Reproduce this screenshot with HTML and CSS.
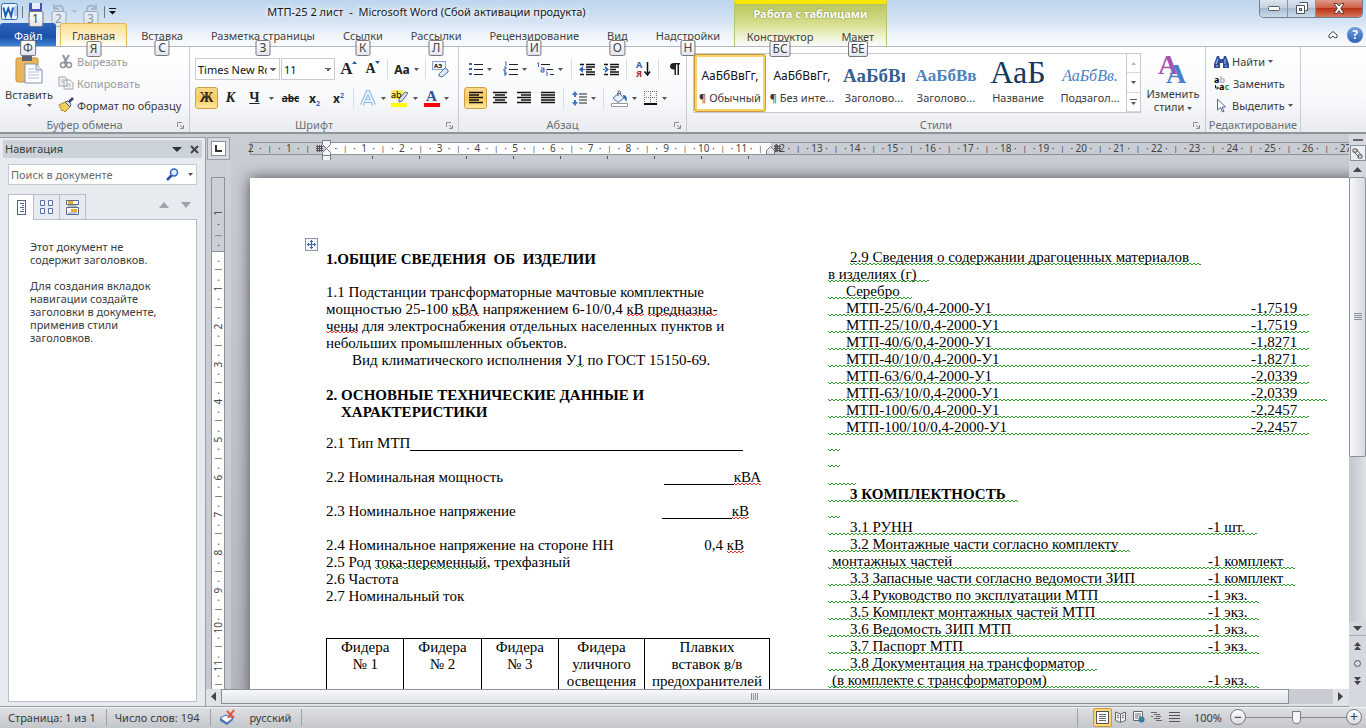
FILE: index.html
```html
<!DOCTYPE html>
<html lang="ru">
<head>
  <meta charset="UTF-8">
  <meta name="viewport" content="width=device-width, initial-scale=1.0">
  <title>МТП-25 2 лист - Microsoft Word</title>
  <link rel="stylesheet" href="styles.css">
</head>
<body>
  <header class="header">
    <div class="header-left">
      <div class="titlebar">
        <svg class="word-logo" width="18" height="18" viewBox="0 0 18 18"><rect x=".5" y=".5" width="16" height="16" rx="2" fill="#eef5fd" stroke="#2f6cb3"/><path d="M13 4h3M13 6h3M13 8h3M13 10h3M13 12h3" stroke="#7ba7d9"/><path d="M2.500 4.500l2 8.500 2.800-7.500 2.800 7.500 2-8.500" fill="none" stroke="#1d5fae" stroke-width="2"/></svg>
        <span class="bar-sep"></span>
        <div class="quick">
          <button class="quick-btn" aria-label="Сохранить"><svg width="16" height="16" viewBox="0 0 16 16"><path d="M1 1h13v14H1z" fill="#4355c0"/><path d="M4 1h8v6H4z" fill="#e8f0ff"/><path d="M4 10h8v5H4z" fill="#b9c6ea"/></svg><kbd class="tip">1</kbd></button>
          <button class="quick-btn faded" aria-label="Отменить"><svg width="16" height="16" viewBox="0 0 16 16"><path d="M3 2v5h5M3.500 6.500C6 2 13 3 12 9c0 2-2 4-4 4" fill="none" stroke="#8c97a6" stroke-width="2"/></svg><kbd class="tip">2</kbd></button>
          <svg class="caret pale" width="5" height="3"><path d="M0 0h5L2.500 3z"/></svg>
          <button class="quick-btn faded" aria-label="Повторить"><svg width="16" height="16" viewBox="0 0 16 16"><path d="M13 2v5H8M12.500 6.500C10 2 3 3 4 9c0 2 2 4 4 4" fill="none" stroke="#8c97a6" stroke-width="2"/></svg><kbd class="tip">3</kbd></button>
          <span class="bar-sep"></span>
          <svg width="7" height="7" viewBox="0 0 7 7"><path d="M0 0h7v1H0zM0 3h7L3.500 6.500z" fill="#111"/></svg>
        </div>
        <h1 class="title">МТП-25 2 лист&nbsp; -&nbsp; Microsoft Word (Сбой активации продукта)</h1>
      </div>
      <nav class="tabs">
        <button class="tab file">Файл<kbd class="tip">Ф</kbd></button>
        <button class="tab active">Главная<kbd class="tip">Я</kbd></button>
        <button class="tab">Вставка<kbd class="tip">С</kbd></button>
        <button class="tab">Разметка страницы<kbd class="tip">З</kbd></button>
        <button class="tab">Ссылки<kbd class="tip">К</kbd></button>
        <button class="tab">Рассылки<kbd class="tip">Л</kbd></button>
        <button class="tab">Рецензирование<kbd class="tip">И</kbd></button>
        <button class="tab">Вид<kbd class="tip">О</kbd></button>
        <button class="tab">Надстройки<kbd class="tip">Н</kbd></button>
      </nav>
    </div>
    <div class="context">
      <div class="context-label">Работа с таблицами</div>
      <nav class="tabs">
        <button class="tab">Конструктор<kbd class="tip">БС</kbd></button>
        <button class="tab">Макет<kbd class="tip">БЕ</kbd></button>
      </nav>
    </div>
    <div class="header-right">
      <div class="window-buttons">
        <button class="win-btn" aria-label="Свернуть"><svg width="12" height="5"><rect x=".5" y=".5" width="11" height="4" rx="1" fill="#fff" stroke="#555c66"/></svg></button>
        <button class="win-btn" aria-label="Восстановить"><svg width="12" height="12"><path d="M3.500.500h8v8h-2M.500 3.500h8v8h-8z" fill="#fff" stroke="#4b525c"/><rect x="3.500" y="6.500" width="2" height="2" fill="none" stroke="#4b525c"/></svg></button>
        <button class="win-btn close" aria-label="Закрыть"><svg width="12" height="11" viewBox="0 0 12 11"><path d="M1 .500h3l2 2.500 2-2.500h3L7.800 5.300 11 10.500H8L6 7.500l-2 3H1l3.200-5.200z" fill="#fff" stroke="#5b3a3a"/></svg></button>
      </div>
      <div class="help-row">
        <svg width="10" height="8" viewBox="0 0 10 8"><path d="M1 4l4-3.500L9 4v2.500L7 7 5 5 3 7 1 6.500z" fill="#fff" stroke="#444"/></svg>
        <button class="help" aria-label="Справка">?</button>
      </div>
    </div>
  </header>

  <section class="ribbon">
    <div class="group clipboard">
      <div class="group-body">
        <button class="big-btn">
          <svg width="30" height="31" viewBox="0 0 30 31"><rect x="2" y="4" width="22" height="24" rx="2" fill="#e9b65c" stroke="#c48d38"/><path d="M8 2h10v5H8z" fill="#5d6470"/><path d="M11 10h11l6 6v13H11z" fill="#fff" stroke="#7d93b5"/><path d="M22 10v6h6" fill="#dbe6f5" stroke="#7d93b5"/><path d="M14 15h6M14 18h11M14 21h11M14 24h11" stroke="#a9bdd8"/></svg>
          Вставить
          <svg class="caret" width="5" height="3"><path d="M0 0h5L2.500 3z"/></svg>
        </button>
        <div class="stack">
          <button class="line-btn disabled"><svg width="16" height="15" viewBox="0 0 16 15"><path d="M5 1l4 8M11 1L6 9" stroke="#8f959d" stroke-width="2"/><circle cx="5" cy="11" r="2.500" fill="none" stroke="#8f959d" stroke-width="1.500"/><circle cx="11" cy="11" r="2.500" fill="none" stroke="#8f959d" stroke-width="1.500"/></svg>Вырезать</button>
          <button class="line-btn disabled"><svg width="16" height="14" viewBox="0 0 16 14"><path d="M1 1h6l2 2v7H1zM6 4h6l3 3v6H6z" fill="#f4f4f4" stroke="#a3a8ae"/><path d="M3 4h3M3 6h3M8 8h5M8 10h5" stroke="#b5b9be"/></svg>Копировать</button>
          <button class="line-btn"><svg width="16" height="14" viewBox="0 0 16 14"><path d="M1 7l6-3 5 5-5 5-2-2-1 1z" fill="#f0cf62" stroke="#b48a2c"/><path d="M7 4l3-1 3 3-1 3z" fill="#d8dce8" stroke="#555b7a"/><path d="M11 4l4-4" stroke="#3d3f66" stroke-width="2.500"/></svg>Формат по образцу</button>
        </div>
      </div>
      <div class="group-label">Буфер обмена<svg class="launcher" width="7" height="7"><path d="M.500 5V.500H5M3 3l3 3M6.500 3v3.500H3" /></svg></div>
    </div>

    <div class="group font">
      <div class="group-body rows">
        <div class="row">
          <select class="combo name" aria-label="Шрифт"><option>Times New Roman</option></select>
          <select class="combo size" aria-label="Размер шрифта"><option>11</option></select>
          <button class="tool first" aria-label="Увеличить размер"><b class="serif grow">A</b><svg class="mark" width="5" height="3"><path d="M0 3h5L2.500 0z" fill="#2c58a8"/></svg></button>
          <button class="tool" aria-label="Уменьшить размер"><b class="serif">A</b><svg class="mark" width="5" height="3"><path d="M0 0h5L2.500 3z" fill="#2c58a8"/></svg></button>
          <span class="sep"></span>
          <button class="tool wide" aria-label="Регистр"><b class="case">Aa</b><svg class="caret" width="5" height="3"><path d="M0 0h5L2.500 3z"/></svg></button>
          <span class="sep"></span>
          <button class="tool" aria-label="Очистить формат"><svg width="17" height="17" viewBox="0 0 17 17"><rect x=".5" y=".5" width="13" height="8" fill="#f2f6fc" stroke="#8aa5cc"/><text x="2" y="7" class="tiny">АЭ</text><path d="M7 13l6-6 3 2v2l-6 5-3-1z" fill="#dfe8f8" stroke="#4c6fae"/></svg></button>
        </div>
        <div class="row">
          <button class="tool on"><b class="serif">Ж</b></button>
          <button class="tool"><b class="serif"><i>К</i></b></button>
          <button class="tool"><b class="serif"><u>Ч</u></b></button>
          <svg class="caret" width="5" height="3"><path d="M0 0h5L2.500 3z"/></svg>
          <button class="tool gap"><b class="strike">abc</b></button>
          <button class="tool"><b class="script">x<sub>2</sub></b></button>
          <button class="tool"><b class="script">x<sup>2</sup></b></button>
          <span class="sep"></span>
          <button class="tool wide" aria-label="Эффекты"><svg width="17" height="17" viewBox="0 0 17 17"><path d="M2 15L7.500 2h1L14 15M5 11h7" fill="none" stroke="#8dbdea" stroke-width="4"/><path d="M2 15L7.500 2h1L14 15M5 11h7" fill="none" stroke="#fff" stroke-width="1.500"/></svg><svg class="caret" width="5" height="3"><path d="M0 0h5L2.500 3z"/></svg></button>
          <button class="tool wide" aria-label="Выделение"><svg width="18" height="17" viewBox="0 0 18 17"><rect width="12" height="9" fill="#f3ee62"/><text x="0" y="8" class="mini">ab</text><path d="M8 9l6-7 3 1-6 8-3 1z" fill="#dbe2ee" stroke="#52608a"/><path d="M0 13h16v4H0z" fill="#ff0"/></svg><svg class="caret" width="5" height="3"><path d="M0 0h5L2.500 3z"/></svg></button>
          <button class="tool wide" aria-label="Цвет текста"><svg width="16" height="17" viewBox="0 0 16 17"><text x="2" y="11" class="letter">A</text><path d="M0 13h16v4H0z" fill="#f00"/></svg><svg class="caret" width="5" height="3"><path d="M0 0h5L2.500 3z"/></svg></button>
        </div>
      </div>
      <div class="group-label">Шрифт<svg class="launcher" width="7" height="7"><path d="M.500 5V.500H5M3 3l3 3M6.500 3v3.500H3"/></svg></div>
    </div>

    <div class="group para">
      <div class="group-body rows">
        <div class="row">
          <button class="tool list" aria-label="Маркеры"><svg width="14" height="14" viewBox="0 0 14 14"><path d="M0 1h3v2H0zM0 6h3v2H0zM0 11h3v2H0z" fill="#3a66b5"/><path d="M5 2.500h9M5 7.500h9M5 12.500h9" stroke="#222"/></svg><svg class="caret" width="5" height="3"><path d="M0 0h5L2.500 3z"/></svg></button>
          <button class="tool list" aria-label="Нумерация"><svg width="14" height="14" viewBox="0 0 14 14"><path d="M1 0h1v4M0 5h2v2H0v2h2M0 10h2v3H0M0 11.500h2" fill="none" stroke="#3a66b5"/><path d="M5 2.500h9M5 7.500h9M5 12.500h9" stroke="#222"/></svg><svg class="caret" width="5" height="3"><path d="M0 0h5L2.500 3z"/></svg></button>
          <button class="tool list" aria-label="Многоуровневый список"><svg width="17" height="15" viewBox="0 0 17 15"><path d="M0 1h1.500v4M4 6h3v4H4V8h3M9 10h1v4M9 8h1" fill="none" stroke="#3a66b5"/><path d="M4 2.500h9M10 7.500h6M13 12.500h4" stroke="#222"/></svg><svg class="caret" width="5" height="3"><path d="M0 0h5L2.500 3z"/></svg></button>
          <span class="sep"></span>
          <button class="tool" aria-label="Уменьшить отступ"><svg width="16" height="13" viewBox="0 0 16 13"><path d="M1 1.500h4M7 1.500h9M7 4h9M7 6.500h6M7 9h9M1 11.500h4M7 11.500h9" stroke="#111" stroke-width="1.500"/><path d="M0 6.500L4 3v7zM3 6h3v1H3z" fill="#2f66c0"/></svg></button>
          <button class="tool" aria-label="Увеличить отступ"><svg width="16" height="13" viewBox="0 0 16 13"><path d="M1 1.500h4M7 1.500h9M7 4h9M7 6.500h6M7 9h9M1 11.500h4M7 11.500h9" stroke="#111" stroke-width="1.500"/><path d="M6 6.500L2 3v7zM0 6h3v1H0z" fill="#2f66c0"/></svg></button>
          <span class="sep"></span>
          <button class="tool" aria-label="Сортировка"><svg width="14" height="16" viewBox="0 0 14 16"><text x="0" y="7" class="mini blue">А</text><text x="0" y="16" class="mini red">Я</text><path d="M11.500 1v12M8.500 10.500l3 3.500 2.500-3.500" fill="none" stroke="#111" stroke-width="1.500"/></svg></button>
          <span class="sep"></span>
          <button class="tool" aria-label="Знаки"><svg width="10" height="12" viewBox="0 0 10 12"><path d="M4 0h6v1.500H9V12H7.500V1.500H6V12H4.500V6.500C1 6.500 0 5 0 3.200 0 1 2 0 4 0z" fill="#222"/></svg></button>
        </div>
        <div class="row">
          <button class="tool on" aria-label="По левому краю"><svg width="14" height="12"><path d="M0 .500h14M0 3h10M0 5.500h14M0 8h10M0 10.500h14" stroke="#111" stroke-width="1.500"/></svg></button>
          <button class="tool" aria-label="По центру"><svg width="14" height="12"><path d="M0 .500h14M2 3h10M0 5.500h14M2 8h10M0 10.500h14" stroke="#111" stroke-width="1.500"/></svg></button>
          <button class="tool" aria-label="По правому краю"><svg width="14" height="12"><path d="M0 .500h14M4 3h10M0 5.500h14M4 8h10M0 10.500h14" stroke="#111" stroke-width="1.500"/></svg></button>
          <button class="tool" aria-label="По ширине"><svg width="14" height="12"><path d="M0 .500h14M0 3h14M0 5.500h14M0 8h14M0 10.500h14" stroke="#111" stroke-width="1.500"/></svg></button>
          <span class="sep"></span>
          <button class="tool wide" aria-label="Интервал"><svg width="15" height="15" viewBox="0 0 15 15"><path d="M3 0l3 4H4v2H2V4H0zM3 15l3-4H4V9H2v2H0z" fill="#3a78c9"/><path d="M7 3h8M7 6h8M7 9h8M7 12h8" stroke="#222"/></svg><svg class="caret" width="5" height="3"><path d="M0 0h5L2.500 3z"/></svg></button>
          <span class="sep"></span>
          <button class="tool wide" aria-label="Заливка"><svg width="17" height="17" viewBox="0 0 17 17"><path d="M2 8l6-5 5 5-6 4.500z" fill="#e8eff9" stroke="#4c6fae"/><path d="M7 6V1.500c2-1.500 3 0 2.500 2.500" fill="none" stroke="#555"/><path d="M12 5c4 0 4 3 3.500 7L13 8z" fill="#3467b4"/><path d="M.500 13.500h16v3H.500z" fill="#fff" stroke="#9a9a9a"/></svg><svg class="caret" width="5" height="3"><path d="M0 0h5L2.500 3z"/></svg></button>
          <button class="tool wide" aria-label="Границы"><svg width="14" height="14" viewBox="0 0 14 14"><path d="M0 .500h13M0 6.500h13M.500 0v13M6.500 0v13M12.500 0v13" stroke="#777" stroke-dasharray="1 1"/><path d="M0 13h13" stroke="#111" stroke-width="2"/></svg><svg class="caret" width="5" height="3"><path d="M0 0h5L2.500 3z"/></svg></button>
        </div>
      </div>
      <div class="group-label">Абзац<svg class="launcher" width="7" height="7"><path d="M.500 5V.500H5M3 3l3 3M6.500 3v3.500H3"/></svg></div>
    </div>

    <div class="group styles">
      <div class="group-body">
        <div class="gallery">
          <button class="style on"><span class="sample">АаБбВвГг,</span><span>¶ Обычный</span></button>
          <button class="style"><span class="sample">АаБбВвГг,</span><span>¶ Без инте...</span></button>
          <button class="style"><span class="sample h1">АаБбВв</span><span>Заголово...</span></button>
          <button class="style"><span class="sample h2">АаБбВв</span><span>Заголово...</span></button>
          <button class="style"><span class="sample name">АаБ</span><span>Название</span></button>
          <button class="style"><span class="sample sub">АаБбВв.</span><span>Подзагол...</span></button>
          <div class="gallery-scroll">
            <button class="pale" aria-label="Вверх"><svg class="caret" width="5" height="3"><path d="M0 3h5L2.500 0z"/></svg></button>
            <button aria-label="Вниз"><svg class="caret" width="5" height="3"><path d="M0 0h5L2.500 3z"/></svg></button>
            <button aria-label="Ещё"><svg class="caret" width="7" height="6"><path d="M0 0h7v1H0zM1 3h5L3.500 6z"/></svg></button>
          </div>
        </div>
        <button class="big-btn change">
          <svg width="30" height="29" viewBox="0 0 30 29"><text x="0" y="19" class="big-a purple">A</text><text x="8" y="28" class="big-a blue2">A</text></svg>
          <span>Изменить<br>стили <svg class="caret" width="5" height="3"><path d="M0 0h5L2.500 3z"/></svg></span>
        </button>
      </div>
      <div class="group-label">Стили<svg class="launcher" width="7" height="7"><path d="M.500 5V.500H5M3 3l3 3M6.500 3v3.500H3"/></svg></div>
    </div>

    <div class="group editing">
      <div class="group-body">
        <div class="stack">
          <button class="line-btn"><svg width="15" height="13" viewBox="0 0 15 13"><path d="M3 1h2l1 3h3l1-3h2l3 8v4H9V8H6v5H0V9z" fill="#2b4d9b"/><path d="M2 9l2-5M11 9V4M2 11h2M11 11h2" stroke="#b9cdf2"/></svg>Найти <svg class="caret" width="5" height="3"><path d="M0 0h5L2.500 3z"/></svg></button>
          <button class="line-btn"><svg width="16" height="15" viewBox="0 0 16 15"><text x="0" y="7" class="mini bold">a<tspan fill="#b5b5b5">b</tspan></text><text x="5" y="14" class="mini bold">a<tspan fill="#2a9a3a">c</tspan></text><path d="M1.500 9v3h3M3 10.500L4.500 12 3 13.500" fill="none" stroke="#222"/></svg>Заменить</button>
          <button class="line-btn"><svg width="15" height="15" viewBox="0 0 15 15"><path d="M3.500 1v11l3-2.500 2 4.500 1.500-.700-2-4.300h3.500z" fill="#fff" stroke="#5666a8"/></svg>Выделить <svg class="caret" width="5" height="3"><path d="M0 0h5L2.500 3z"/></svg></button>
        </div>
      </div>
      <div class="group-label">Редактирование</div>
    </div>
  </section>

  <main class="workspace">
    <aside class="nav-pane">
      <div class="nav-head"><h2>Навигация</h2>
        <svg width="10" height="5"><path d="M0 0h10L5 5z" fill="#333"/></svg>
        <button class="plain" aria-label="Закрыть"><svg width="9" height="9"><path d="M1 1l7 7M8 1L1 8" stroke="#444" stroke-width="2"/></svg></button>
      </div>
      <div class="search">
        <input type="text" placeholder="Поиск в документе" aria-label="Поиск в документе">
        <svg width="13" height="13" viewBox="0 0 13 13"><circle cx="8" cy="4.500" r="3.500" fill="#dcebfc" stroke="#2f64bd" stroke-width="1.500"/><path d="M5.500 7.500L1 12" stroke="#2c4f9e" stroke-width="2.500"/></svg>
        <svg class="caret" width="5" height="3"><path d="M0 0h5L2.500 3z"/></svg>
      </div>
      <div class="nav-tabs">
        <button class="nav-tab on" aria-label="Заголовки"><svg width="9" height="15"><rect x=".5" y=".5" width="8" height="14" fill="#fff" stroke="#4f6488"/><path d="M3 3.500h4M5 5.500h2M3 7.500h4M5 9.500h2M3 11.500h4" stroke="#4f6488"/></svg></button>
        <button class="nav-tab" aria-label="Страницы"><svg width="13" height="15"><path d="M.500.500h4v5h-4zM8.500.500h4v5h-4zM.500 8.500h4v5h-4zM8.500 8.500h4v5h-4z" fill="#fff" stroke="#5570a0"/></svg></button>
        <button class="nav-tab" aria-label="Результаты"><svg width="13" height="15"><path d="M.500.500h12v4H.500zM.500 7.500h12v7H.500z" fill="#fff" stroke="#5b6b85"/><path d="M2 1h5v3H2zM5 9h6v3H5z" fill="#f0a92c"/><path d="M2 13h9M2 6h9" stroke="#7f8ba0"/></svg></button>
        <div class="nav-arrows"><svg width="10" height="6"><path d="M0 6h10L5 0z"/></svg><svg width="10" height="6"><path d="M0 0h10L5 6z"/></svg></div>
      </div>
      <div class="nav-body">
        <p>Этот документ не содержит заголовков.</p>
        <p>Для создания вкладок навигации создайте заголовки в документе, применив стили заголовков.</p>
      </div>
    </aside>

    <section class="editor">
      <div class="tab-type"><span><svg width="7" height="7"><path d="M1 0v6h6" fill="none" stroke="#333" stroke-width="2"/></svg></span></div>
      <div class="hruler-wrap">
        <div class="hruler">
          <div class="marks before" data-from="-2" data-to="0"></div>
          <div class="marks after" data-from="0" data-to="27"></div>
          <svg class="grid-mark" width="9" height="9"><path d="M0 2.500h7M0 4.500h7M0 6.500h7M1.500 1v7M3.500 1v7M5.500 1v7" stroke="#555"/></svg>
          <svg class="indent" width="9" height="21" viewBox="0 0 9 21"><path d="M.500.500h8v4l-4 4-4-4zM4.500 8.500l4 4v3h-8v-3zM.500 15.500h8v5h-8z" fill="#f4f5f7" stroke="#777b82"/></svg>
          <svg class="indent right" width="9" height="9" viewBox="0 0 9 9"><path d="M4.500.500l4 4v4h-8v-4z" fill="#e4e6ea" stroke="#777b82"/></svg>
          <svg class="grid-mark column-end" width="9" height="9"><path d="M0 2.500h7M0 4.500h7M0 6.500h7M1.500 1v7M3.500 1v7M5.500 1v7" stroke="#555"/></svg>
        </div>
        <div class="stops"></div>
      </div>
      <div class="vruler-wrap">
        <div class="vruler">
          <div class="vmargin"><span>1</span><span>·</span><span>|</span><span>·</span></div>
          <div class="vmarks marks" data-from="0" data-to="12"></div>
        </div>
      </div>
      <div class="canvas">
        <article class="page">
          <svg class="anchor" width="13" height="13"><rect x=".5" y=".5" width="12" height="12" fill="#f2f5fa" stroke="#8c95a3"/><path d="M6.500 2v9M2 6.500h9M5 3.500h3M5 9.500h3M3.500 5v3M9.500 5v3" stroke="#3c66ad"/></svg>
          <div class="col">
            <h3>1.ОБЩИЕ СВЕДЕНИЯ&nbsp; ОБ&nbsp; ИЗДЕЛИИ</h3>
            <p>1.1 Подстанции трансформаторные мачтовые комплектные<br>мощностью 25-100 <span class="err">кВА</span> напряжением 6-10/0,4 <span class="err">кВ</span> <span class="err">предназна-</span><br><span class="err">чены</span> для электроснабжения отдельных населенных пунктов и<br>небольших промышленных объектов.<br><span class="indented">Вид климатического исполнения У<span class="gram">1</span> по ГОСТ 15150-69.</span></p>
            <h3 class="numbered">2. ОСНОВНЫЕ ТЕХНИЧЕСКИЕ ДАННЫЕ И ХАРАКТЕРИСТИКИ</h3>
            <p class="field type">2.1 Тип МТП<span class="blank long"></span></p>
            <p class="field">2.2 Номинальная мощность<span class="value"><span class="blank"></span><span class="err">кВА</span></span></p>
            <p class="field">2.3 Номинальное напряжение<span class="value volts"><span class="blank"></span><span class="err">кВ</span></span></p>
            <p class="field">2.4 Номинальное напряжение на стороне НН<span class="value low">0,4&nbsp;<span class="err">кВ</span></span></p>
            <p class="tight">2.5 Род <span class="gram">тока-переменный</span>, трехфазный<br>2.6 Частота<br>2.7 Номинальный ток</p>
            <table class="feeders">
              <tr><th>Фидера<br>№ 1</th><th>Фидера<br>№ 2</th><th>Фидера<br>№ 3</th><th>Фидера<br>уличного<br>освещения</th><th>Плавких<br>вставок <span class="gram">в</span>/в<br>предохранителей</th></tr>
            </table>
          </div>
          <div class="col second">
            <div class="item first"><span>2.9 Сведения о содержании драгоценных материалов</span></div>
            <div class="item flush"><span>в изделиях (г)</span></div>
            <div class="item metal"><span>Серебро</span></div>
            <div class="item metal"><span>МТП-25/6/0,4-2000-У1</span><span>-1,7519</span></div>
            <div class="item metal"><span>МТП-25/10/0,4-2000-У1</span><span>-1,7519</span></div>
            <div class="item metal"><span>МТП-40/6/0,4-2000-У1</span><span>-1,8271</span></div>
            <div class="item metal"><span>МТП-40/10/0,4-2000-У1</span><span>-1,8271</span></div>
            <div class="item metal"><span>МТП-63/6/0,4-2000-У1</span><span>-2,0339</span></div>
            <div class="item metal long"><span>МТП-63/10/0,4-2000-У1</span><span>-2,0339</span></div>
            <div class="item metal"><span>МТП-100/6/0,4-2000-У1</span><span>-2,2457</span></div>
            <div class="item metal"><span>МТП-100/10/0,4-2000-У1</span><span>-2,2457</span></div>
            <div class="item empty"></div>
            <div class="item empty"></div>
            <div class="item empty wide"></div>
            <h3 class="item">3 КОМПЛЕКТНОСТЬ</h3>
            <div class="item empty"></div>
            <div class="item"><span>3.1 РУНН</span><span>-1 шт.</span></div>
            <div class="item"><span>3.2 Монтажные части согласно комплекту</span></div>
            <div class="item back"><span>монтажных частей</span><span>-1 комплект</span></div>
            <div class="item"><span>3.3 Запасные части согласно ведомости ЗИП</span><span>-1 комплект</span></div>
            <div class="item"><span>3.4 Руководство по эксплуатации МТП</span><span>-1 экз.</span></div>
            <div class="item"><span>3.5 Комплект монтажных частей МТП</span><span>-1 экз.</span></div>
            <div class="item"><span>3.6 Ведомость ЗИП МТП</span><span>-1 экз.</span></div>
            <div class="item"><span>3.7 Паспорт МТП</span><span>-1 экз.</span></div>
            <div class="item"><span>3.8 Документация на трансформатор</span></div>
            <div class="item back"><span>(в комплекте с трансформатором)</span><span>-1 экз.</span></div>
          </div>
        </article>
      </div>
      <div class="vscroll">
        <span class="split"></span>
        <button class="ruler-btn" aria-label="Линейка"><svg width="11" height="11"><path d="M1 1h4v3H1zM6 7h4v3H6zM2 4l5 5M5 2l4 5" fill="none" stroke="#555"/></svg></button>
        <svg class="up" width="9" height="5"><path d="M0 5h9L4.500 0z"/></svg>
        <div class="vtrack"><div class="vthumb"><svg width="8" height="8"><path d="M0 .500h8M0 2.500h8M0 4.500h8M0 6.500h8" stroke="#8d929a"/></svg></div></div>
        <svg width="9" height="5"><path d="M0 0h9L4.500 5z"/></svg>
        <div class="browse">
          <svg width="7" height="8"><path d="M0 4h7L3.500 0zM0 8h7L3.500 4z"/></svg>
          <svg width="7" height="7"><circle cx="3.500" cy="3.500" r="3" fill="none" stroke="#555"/></svg>
          <svg width="7" height="8"><path d="M0 0h7L3.500 4zM0 4h7L3.500 8z"/></svg>
        </div>
      </div>
      <div class="hscroll">
        <svg width="5" height="9"><path d="M5 0v9L0 4.500z"/></svg>
        <div class="htrack"><div class="hthumb"><svg width="8" height="7"><path d="M.500 0v7M2.500 0v7M4.500 0v7M6.500 0v7" stroke="#8d929a"/></svg></div></div>
        <svg width="5" height="9"><path d="M0 0v9l5-4.500z"/></svg>
      </div>
    </section>
  </main>

  <footer class="status">
    <span class="cell pages">Страница: 1 из 1</span>
    <span class="cell words">Число слов: 194</span>
    <span class="cell lang"><svg width="17" height="16" viewBox="0 0 17 16"><path d="M1 9l6-3 7 3-6 5z" fill="#fff" stroke="#4269ae"/><path d="M1 9v3l7 4 6-5V9l-6 5z" fill="#4b74bd"/><path d="M8 2l7 7M15 1L9 9" stroke="#e2553f" stroke-width="2"/></svg>русский</span>
    <div class="views">
      <button class="view on" aria-label="Разметка"><svg width="13" height="13"><rect x=".5" y=".5" width="12" height="12" fill="#fff" stroke="#555"/><path d="M3 3.500h7M3 5.500h7M3 7.500h7M3 9.500h7" stroke="#666"/></svg></button>
      <button class="view" aria-label="Чтение"><svg width="12" height="12"><path d="M.500 1l5 2 5-2v8.500l-5 2-5-2zM5.500 3v8M2 4l2 1M2 6l2 1M7 5l2-1M7 7l2-1" fill="#f4f4f4" stroke="#666"/></svg></button>
      <button class="view" aria-label="Веб-документ"><svg width="12" height="12"><path d="M.500.500h9v9h-9zM2 3h6M2 5h6M2 7h3" fill="#fff" stroke="#666"/><circle cx="8.500" cy="8.500" r="3" fill="#2f78a8"/><path d="M7 8l2-1 1 2z" fill="#4cae5a"/></svg></button>
      <button class="view" aria-label="Структура"><svg width="11" height="10"><path d="M0 .500h6M3 2.500h6M5 4.500h5M3 6.500h6M5 8.500h6M0 4.500h2" stroke="#666"/></svg></button>
      <button class="view" aria-label="Черновик"><svg width="11" height="10"><path d="M0 .500h11M0 3.500h11M0 6.500h11M0 9.500h11" stroke="#555"/></svg></button>
    </div>
    <label class="zoom" for="zoom">100%</label>
    <button class="round" aria-label="Уменьшить">−</button>
    <input type="range" id="zoom" class="slider" min="0" max="100" value="50">
    <button class="round" aria-label="Увеличить">+</button>
  </footer>
  <script src="rulers.js"></script>
</body>
</html>
```
FILE: styles.css
```css
* {
  box-sizing: border-box;
}
body {
  margin: 0;
  height: 100vh;
  display: flex;
  flex-direction: column;
  overflow: hidden;
  font-family: "Noto Sans", sans-serif;
  font-size: 11px;
  color: #3b3b3b;
}
button, input, select, kbd {
  font-family: inherit;
  font-size: inherit;
  color: inherit;
}
button {
  padding: 0;
  border: 0;
  background: none;
}
svg {
  display: block;
  flex: none;
  overflow: visible;
}
h1, h2, h3, p {
  margin: 0;
  font-size: inherit;
}
.caret {
  fill: #555;
}
.pale .caret, .caret.pale {
  fill: #b5b9be;
}

/* title bar and tabs */
.header {
  display: flex;
  height: 47px;
  flex: none;
  background: linear-gradient(#bdd5ed, #d3e3f3 45%, #f1f6fb 80%, #f8fafc);
  border-bottom: 1px solid #b6bac0;
}
.header-left {
  width: 734px;
  display: flex;
  flex-direction: column;
}
.titlebar {
  height: 24px;
  display: flex;
  align-items: center;
  padding-left: 1px;
  gap: 3px;
}
.bar-sep {
  width: 1px;
  height: 12px;
  background: #6f7b8a;
}
.quick {
  display: flex;
  align-items: center;
  gap: 4px;
}
.quick-btn {
  position: relative;
  width: 19px;
  height: 20px;
  display: flex;
  justify-content: center;
}
.quick-btn.faded {
  opacity: 0.5;
}
.tip {
  position: absolute;
  z-index: 3;
  left: 50%;
  transform: translateX(-50%);
  min-width: 15px;
  height: 16px;
  padding: 0 2px;
  border: 1px solid #77777c;
  border-radius: 2px;
  background: linear-gradient(#fff, #e4e4ef);
  font-size: 12px;
  line-height: 14px;
  font-weight: normal;
  text-align: center;
  color: #444;
  text-shadow: none;
}
.quick-btn .tip {
  top: 9px;
}
.title {
  flex: 1;
  text-align: center;
  font-weight: normal;
  color: #1a1a1a;
  text-shadow: 0 0 6px #fff, 0 0 6px #fff;
}
.tabs {
  display: flex;
  height: 23px;
}
.tab {
  position: relative;
  padding: 1px 14px 0;
  white-space: nowrap;
  color: #444;
}
.tab .tip {
  top: 17px;
}
.tab.file {
  width: 56px;
  margin-right: 4px;
  border-radius: 3px 3px 0 0;
  background: linear-gradient(#2d66bd, #1d4fa5 60%, #3b86d8);
  color: #fff;
}
.tab.active {
  width: 68px;
  padding: 0;
  border: 1px solid #dfb858;
  border-bottom: 0;
  border-radius: 3px 3px 0 0;
  background: linear-gradient(#fbdf92, #fdf0c8 60%, #fff);
}
.context {
  width: 153px;
  border-top: 4px solid #fbe600;
  border-left: 1px solid #b9c36a;
  border-right: 1px solid #b9c36a;
  background: linear-gradient(#b9c65c, #d5dd8c 45%, #f0f4d6 80%, #f8fafc);
}
.context-label {
  height: 20px;
  line-height: 20px;
  text-align: center;
  font-weight: bold;
  color: #fff;
  text-shadow: 0 0 2px #76803a;
}
.context .tabs {
  justify-content: center;
}
.header-right {
  flex: 1;
  display: flex;
  flex-direction: column;
  align-items: flex-end;
}
.window-buttons {
  display: flex;
  height: 18px;
  margin-right: 3px;
  border: 1px solid #6f7e90;
  border-top: 0;
  border-radius: 0 0 5px 5px;
  overflow: hidden;
}
.win-btn {
  width: 28px;
  display: flex;
  align-items: center;
  justify-content: center;
  border-right: 1px solid #8593a4;
  background: linear-gradient(#dce6f1, #c3d0df 45%, #a9bbd0 50%, #cbdcec);
}
.win-btn.close {
  width: 46px;
  border-right: 0;
  background: linear-gradient(#dd9a8a, #cf5f45 45%, #b93218 50%, #d8755a);
}
.help-row {
  display: flex;
  align-items: center;
  gap: 9px;
  height: 29px;
  padding: 6px 3px 0 0;
}
.help {
  width: 16px;
  height: 16px;
  border-radius: 50%;
  background: linear-gradient(#6f9fe0, #2f62b8);
  color: #fff;
  font-size: 12px;
  line-height: 16px;
  font-weight: bold;
}

/* ribbon */
.ribbon {
  display: flex;
  flex: none;
  height: 87px;
  background: linear-gradient(#fff, #f8f9fb 60%, #e9ebef);
  border-bottom: 2px solid #8f949b;
}
.group {
  display: flex;
  flex-direction: column;
  flex: none;
  border-right: 1px solid #c8ccd2;
}
.group.clipboard { width: 190px; }
.group.font { width: 269px; }
.group.para { width: 228px; }
.group.styles { width: 519px; }
.group.editing { width: 95px; }
.group-body {
  flex: 1;
  display: flex;
}
.group-label {
  position: relative;
  height: 16px;
  line-height: 17px;
  text-align: center;
  padding-right: 20px;
  color: #6a6f77;
}
.editing .group-label {
  padding: 0;
}
.launcher {
  position: absolute;
  right: 5px;
  top: 6px;
  fill: none;
  stroke: #8a8f96;
}
.big-btn {
  width: 58px;
  display: flex;
  flex-direction: column;
  align-items: center;
  padding-top: 7px;
  gap: 3px;
  line-height: 13px;
}
.big-btn.change {
  width: 60px;
  margin-left: 2px;
  padding-top: 8px;
}
.big-btn span .caret {
  display: inline-block;
  vertical-align: middle;
}
.stack {
  display: flex;
  flex-direction: column;
  padding-top: 3px;
}
.editing .stack {
  padding-left: 8px;
}
.line-btn {
  display: flex;
  align-items: center;
  gap: 3px;
  height: 22px;
  white-space: nowrap;
}
.disabled {
  color: #9b9b9b;
}
.rows {
  flex-direction: column;
  padding: 11px 0 0 5px;
  gap: 7px;
}
.row {
  display: flex;
  align-items: center;
  height: 22px;
  gap: 1px;
}
.combo {
  appearance: none;
  height: 22px;
  padding: 0 12px 0 2px;
  border: 1px solid #c9cdd3;
  border-radius: 0;
  background: linear-gradient(45deg, transparent 50%, #666 50%) right 6px center / 3px 3px no-repeat, linear-gradient(-45deg, transparent 50%, #666 50%) right 3px center / 3px 3px no-repeat, #fff;
  color: #111;
}
.combo.name {
  width: 85px;
}
.combo.size {
  width: 54px;
}
.tool {
  width: 23px;
  height: 22px;
  display: flex;
  align-items: center;
  justify-content: center;
  gap: 4px;
  color: #222;
}
.tool.first {
  margin-left: 1px;
}
.tool.wide {
  width: 31px;
}
.tool.list {
  width: 34px;
}
.tool.gap {
  margin-left: 4px;
}
.tool.on {
  border: 1px solid #cda044;
  border-radius: 3px;
  background: linear-gradient(#fcd98a, #fbc95a 50%, #ffe89a);
}
.row > .caret {
  margin-left: 2px;
}
.sep {
  width: 1px;
  height: 20px;
  margin: 0 3px;
  background: #dadde2;
}
.font .sep {
  margin: 0 2px;
}
.serif {
  font-family: "Liberation Serif", serif;
  font-size: 14px;
}
.serif.grow {
  font-size: 17px;
}
.tool .serif + .mark {
  align-self: flex-start;
  margin: 3px 0 0 -5px;
}
.case {
  font-size: 12px;
}
.strike {
  font-size: 10px;
  text-decoration: line-through;
}
.script {
  font-size: 12px;
}
.script sub, .script sup {
  font-size: 7px;
  line-height: 0;
  color: #2c66bf;
}
.tiny {
  font-size: 6px;
  font-weight: bold;
}
.mini {
  font-size: 9px;
}
.mini.bold, .mini.blue, .mini.red {
  font-weight: bold;
}
.mini.blue { fill: #2f5fae; }
.mini.red { fill: #a83232; }
.letter {
  font: bold 15px "Liberation Serif", serif;
  fill: #2b4f92;
}
.big-a {
  font: bold 28px "Liberation Serif", serif;
}
.purple { fill: #a653b0; }
.blue2 { fill: #4c7fcb; }
.styles .group-body {
  padding-left: 6px;
}
.gallery {
  display: flex;
  height: 60px;
  margin-top: 6px;
  border: 1px solid #c6cad0;
  background: #fff;
}
.style {
  width: 72px;
  padding: 0 4px 4px;
  display: flex;
  flex-direction: column;
  align-items: center;
  overflow: hidden;
  white-space: nowrap;
  line-height: 16px;
}
.style.on {
  padding: 0 1px 1px;
  border: 3px solid #f9d368;
  outline: 1px solid #cb9a3b;
  outline-offset: -1px;
  border-radius: 3px;
}
.sample {
  width: 62px;
  height: 36px;
  line-height: 44px;
  overflow: hidden;
  font-size: 12px;
  color: #111;
}
.style.on .sample {
  height: 33px;
  line-height: 38px;
}
.sample.h1 {
  font: bold 19px/44px "Liberation Serif", serif;
  color: #365f91;
}
.sample.h2 {
  font: bold 17px/44px "Liberation Serif", serif;
  color: #4f81bd;
}
.sample.name {
  font: 32px/36px "Liberation Serif", serif;
  color: #17365d;
}
.sample.sub {
  font: italic 16px/44px "Liberation Serif", serif;
  color: #4f81bd;
}
.gallery-scroll {
  width: 14px;
  display: flex;
  flex-direction: column;
  border-left: 1px solid #c6cad0;
}
.gallery-scroll button {
  flex: 1;
  display: flex;
  align-items: center;
  justify-content: center;
  border-bottom: 1px solid #d5d8dd;
}

/* navigation pane */
.workspace {
  flex: 1;
  min-height: 0;
  display: flex;
  background: linear-gradient(#cacdd3, #b4b7bc);
}
.nav-pane {
  width: 206px;
  margin-top: 3px;
  padding: 2px 8px 4px;
  display: flex;
  flex-direction: column;
  flex: none;
  background: #e7eaee;
  border: solid #9a9fa7;
  border-width: 1px 1px 1px 0;
}
.nav-head {
  display: flex;
  align-items: center;
  gap: 8px;
  height: 18px;
  margin: 0 -5px;
  padding: 0 3px 0 2px;
  background: #ccd2da;
}
.nav-head h2 {
  flex: 1;
  font-weight: normal;
  line-height: 16px;
}
.search {
  display: flex;
  align-items: center;
  gap: 9px;
  height: 21px;
  margin-top: 6px;
  padding-right: 3px;
  border: 1px solid #c4c9d0;
  background: #fff;
}
.search input {
  flex: 1;
  min-width: 0;
  padding: 0 2px;
  border: 0;
  outline: 0;
}
.search input::placeholder {
  color: #6b6b6b;
}
.nav-tabs {
  display: flex;
  height: 26px;
  margin-top: 9px;
}
.nav-tab {
  width: 26px;
  display: flex;
  align-items: center;
  justify-content: center;
  border: 1px solid #b9bfc8;
  border-left-width: 0;
}
.nav-tab.on {
  border-left-width: 1px;
  border-bottom: 0;
  border-right-color: #b9bfc8;
  background: #fff;
}
.nav-arrows {
  flex: 1;
  display: flex;
  justify-content: flex-end;
  gap: 12px;
  padding: 8px 6px 0 0;
  border-bottom: 1px solid #b9bfc8;
  fill: #9ea3aa;
}
.nav-body {
  flex: 1;
  padding: 20px 30px 0 21px;
  border: 1px solid #b9bfc8;
  border-top: 0;
  background: #fff;
  line-height: 13px;
}
.nav-body p + p {
  margin-top: 13px;
}

/* editor frame and rulers */
.editor {
  flex: 1;
  min-width: 0;
  display: grid;
  grid-template-columns: 25px 1fr 17px;
  grid-template-rows: 26px 1fr 18px;
}
.tab-type {
  margin: 3px 1px 0 1px;
  padding: 3px;
  border: 1px solid #9a9fa7;
  background: #d5d9df;
}
.tab-type span {
  height: 100%;
  display: flex;
  align-items: center;
  justify-content: center;
  border: 1px solid #8b9098;
  background: #fff;
}
.hruler-wrap {
  min-width: 0;
  padding: 8px 0 0 19px;
}
.hruler {
  position: relative;
  display: flex;
  gap: 9px;
  height: 13px;
  border: 1px solid #8e939b;
  border-right: 0;
  background: linear-gradient(90deg, transparent 76px, #fff 76px, #fff 520px, transparent 520px);
}
.marks {
  display: flex;
  flex: none;
  font-size: 10px;
  line-height: 11px;
  color: #444;
}
.marks span {
  flex: 1 1 0;
  width: 0;
  display: flex;
  justify-content: center;
  white-space: nowrap;
}
.marks span.line {
  font-size: 7px;
  color: #222;
}
.marks.before {
  width: 76px;
  margin-left: -5px;
}
.marks.after {
  width: 1020px;
}
.hruler .indent, .hruler .grid-mark {
  position: absolute;
  left: 71px;
  top: -3px;
}
.hruler .grid-mark {
  left: 65px;
  top: 1px;
}
.hruler .indent.right {
  left: 515px;
  top: 3px;
}
.hruler .grid-mark.column-end {
  left: 523px;
}
.stops {
  display: flex;
  padding: 1px 0 0 122px;
  gap: 46px;
}
.stops i {
  width: 1px;
  height: 3px;
  background: #555;
}
.hruler-wrap, .canvas {
  overflow: hidden;
}
.vruler-wrap {
  grid-row: 2;
  overflow: hidden;
  padding: 17px 6px 0 5px;
  background: linear-gradient(#cdd1d7, #c6c9cf);
}
.vruler {
  border: 1px solid #8e939b;
}
.vmargin {
  height: 74px;
  padding-top: 30px;
  border-bottom: 1px solid #8e939b;
  display: flex;
  flex-direction: column;
  font-size: 10px;
  line-height: 12px;
}
.vmargin span, .vmarks span {
  flex: 1 1 0;
  width: 12px;
  height: 0;
  display: flex;
  align-items: center;
  justify-content: center;
  writing-mode: vertical-rl;
  transform: rotate(180deg);
}
.vmargin span:nth-child(3) {
  font-size: 7px;
}
.vmarks {
  flex-direction: column;
  height: 456px;
  padding-top: 4px;
  background: #fff;
  line-height: 12px;
}

/* document */
.canvas {
  grid-row: 2;
  padding: 18px 0 0 19px;
}
.page {
  position: relative;
  display: flex;
  width: 1200px;
  height: 1300px;
  padding: 73px 0 0 76px;
  background: #fff;
  box-shadow: 0 0 14px #4c4f55;
  font-family: "Liberation Serif", serif;
  font-size: 15px;
  line-height: 17px;
  color: #000;
  white-space: nowrap;
}
.anchor {
  position: absolute;
  left: 55px;
  top: 60px;
}
.col {
  width: 444px;
}
.col p {
  margin-top: 16px;
}
.col .numbered {
  width: 340px;
  margin-top: 18px;
  padding-left: 15px;
  text-indent: -15px;
  white-space: normal;
}
.indented {
  padding-left: 26px;
}
.col .field {
  display: flex;
  margin-top: 17px;
}
.col .field.type {
  margin-top: 14px;
}
.col .tight {
  margin-top: 0;
}
.blank {
  width: 70px;
  height: 16px;
  border-bottom: 1px solid #000;
}
.blank.long {
  width: 333px;
}
.value {
  display: flex;
  margin-left: auto;
  padding-right: 9px;
}
.value.volts {
  padding-right: 21px;
}
.value.low {
  padding-right: 26px;
}
.err, .gram, .item {
  background: url("data:image/svg+xml,%3Csvg xmlns='http://www.w3.org/2000/svg' width='4' height='3'%3E%3Cpath d='M0 0l2 2 2-2' fill='none' stroke='%23e33' stroke-width='1'/%3E%3C/svg%3E") left bottom repeat-x;
}
.gram, .item {
  background-image: url("data:image/svg+xml,%3Csvg xmlns='http://www.w3.org/2000/svg' width='4' height='3'%3E%3Cpath d='M0 0l2 2 2-2' fill='none' stroke='%232a9a2a' stroke-width='1'/%3E%3C/svg%3E");
}
.feeders {
  width: 444px;
  height: 90px;
  margin-top: 33px;
  border-collapse: collapse;
  table-layout: fixed;
}
.feeders th {
  padding: 0;
  border: 1px solid #000;
  font-weight: normal;
  vertical-align: top;
}
.feeders th:nth-child(4) {
  width: 86px;
}
.feeders th:nth-child(5) {
  width: 125px;
}
.second {
  width: auto;
  margin: -2px 0 0 58px;
}
.item {
  display: flex;
  width: fit-content;
  height: 17px;
  padding: 0 12px 0 22px;
}
.item span:first-child:not(:last-child) {
  width: 358px;
}
.item.first {
  margin-left: 22px;
  padding-left: 0;
}
.item.flush {
  padding-left: 0;
}
.item.metal {
  padding-left: 18px;
}
.item.metal span:first-child:not(:last-child) {
  width: 405px;
}
.item.long {
  padding-right: 30px;
}
.item.back {
  padding-left: 4px;
}
.item.back span:first-child:not(:last-child) {
  width: 376px;
}
.item.empty {
  height: 16px;
  padding: 0;
  width: 12px;
}
.item.empty.wide {
  width: 28px;
  height: 18px;
}

/* scroll bars */
.vscroll {
  grid-column: 3;
  grid-row: 1 / 4;
  display: flex;
  flex-direction: column;
  align-items: center;
  gap: 4px;
  padding-top: 5px;
  background: #d5d9df;
  fill: #444;
}
.split {
  width: 10px;
  height: 2px;
  background: #666;
}
.ruler-btn {
  width: 16px;
  height: 16px;
  display: flex;
  align-items: center;
  justify-content: center;
  border: 1px solid #8b9098;
  background: #eceef1;
}
.vscroll .up {
  margin: 2px 0 1px;
}
.vtrack {
  flex: 1;
  align-self: stretch;
  background: linear-gradient(90deg, #c3c7cd, #dcdfe4);
}
.vthumb {
  height: 63%;
  display: flex;
  align-items: center;
  justify-content: center;
  border: 1px solid #8b9098;
  border-radius: 2px;
  background: linear-gradient(90deg, #f7f8fa, #d7dbe1);
}
.browse {
  display: flex;
  flex-direction: column;
  align-items: center;
  gap: 10px;
  align-self: stretch;
  padding: 6px 0 22px;
  border-top: 1px solid #a9adb4;
}
.hscroll {
  grid-column: 1 / 3;
  grid-row: 3;
  display: flex;
  align-items: center;
  gap: 5px;
  padding: 0 6px 2px 5px;
  background: #dfe3e8;
  border-bottom: 1px solid #9a9fa7;
  fill: #444;
}
.htrack {
  flex: 1;
  align-self: stretch;
  background: #c9cdd3;
}
.hthumb {
  width: 96%;
  height: 100%;
  display: flex;
  align-items: center;
  justify-content: center;
  border: 1px solid #8b9098;
  background: linear-gradient(#f7f8fa, #dfe2e7);
}

/* status bar */
.status {
  flex: none;
  height: 21px;
  display: flex;
  align-items: center;
  padding: 0 4px 2px 8px;
  border-top: 1px solid #f2f3f5;
  background: linear-gradient(#dddfe3, #c3c6cb);
}
.cell {
  height: 17px;
  display: flex;
  align-items: center;
  gap: 14px;
  padding-right: 10px;
  margin-right: 8px;
  border-right: 1px solid #9ea2a9;
}
.views {
  display: flex;
  align-items: center;
  gap: 0;
  margin-left: auto;
  padding-left: 15px;
  border-left: 1px solid #9ea2a9;
}
.view {
  width: 18px;
  height: 19px;
  display: flex;
  align-items: center;
  justify-content: center;
}
.view.on {
  width: 19px;
  border: 1px solid #c89a3c;
  border-radius: 2px;
  background: #fcd777;
}
.zoom {
  padding: 0 8px 0 10px;
}
.round {
  width: 16px;
  height: 16px;
  border: 1px solid #777b82;
  border-radius: 50%;
  background: linear-gradient(#fff, #d9dce1);
  font-size: 14px;
  line-height: 12px;
}
.slider {
  appearance: none;
  width: 100px;
  height: 16px;
  margin: 0;
  background: linear-gradient(#85898f, #85898f) center / 100% 1px no-repeat;
}
.slider::-webkit-slider-thumb {
  appearance: none;
  width: 9px;
  height: 13px;
  border: 1px solid #777b82;
  border-radius: 1px 1px 5px 5px;
  background: #f4f5f7;
}
```
FILE: rulers.js
```js
// four marks per centimetre: dot, line, dot, number
document.querySelectorAll('.marks').forEach((el) => {
  const from = Number(el.dataset.from);
  const to = Number(el.dataset.to);
  const horizontalMargin = from < 0;

  const add = (text) => {
    const mark = document.createElement('span');
    mark.textContent = text;
    if (text === '|') mark.className = 'line';
    el.appendChild(mark);
  };

  for (let i = from; i < to; i++) {
    if (horizontalMargin) add(String(-i));
    add('·');
    add('|');
    add('·');
    if (!horizontalMargin) add(String(i + 1));
  }
});

const stops = document.querySelector('.stops');
for (let i = 0; i < 9; i++) {
  stops.appendChild(document.createElement('i'));
}
```
